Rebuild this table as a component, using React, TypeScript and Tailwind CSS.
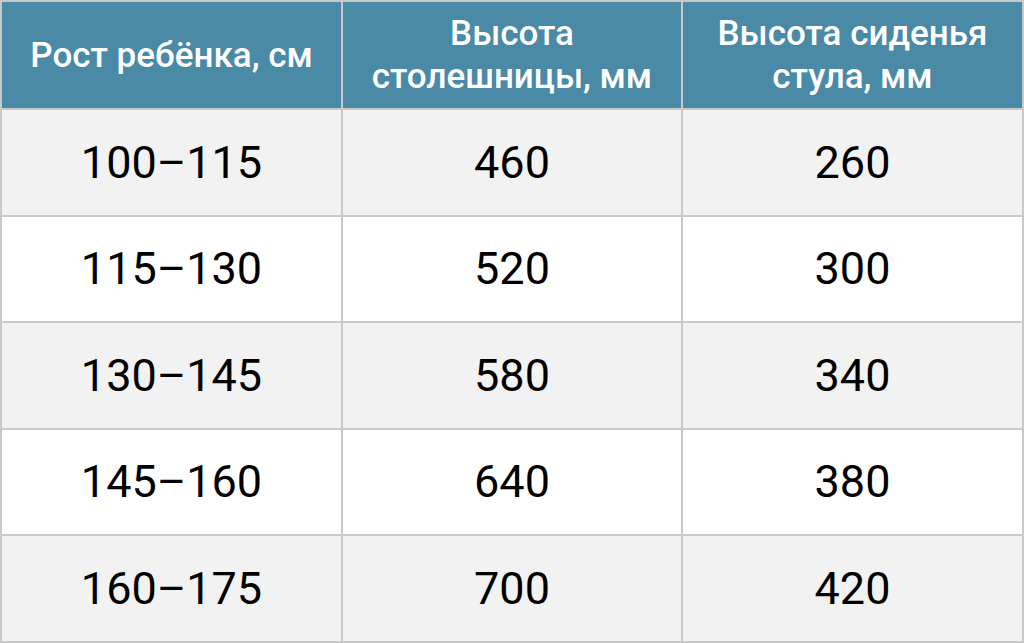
import React from 'react';

const rows: [string, string, string][] = [
  ['100–115', '460', '260'],
  ['115–130', '520', '300'],
  ['130–145', '580', '340'],
  ['145–160', '640', '380'],
  ['160–175', '700', '420'],
];

const headers = ['Рост ребёнка, см', 'Высота\nстолешницы, мм', 'Высота сиденья\nстула, мм'];

const App: React.FC = () => {
  return (
    <div
      className="w-[1024px] h-[643px] grid grid-cols-[339px_338px_339px] grid-rows-[106px_1fr_1fr_1fr_1fr_1fr] gap-[2px] p-[2px] bg-[#c9c9c9]"
      style={{ fontFamily: 'Roboto, "Noto Sans", sans-serif' }}
    >
      {headers.map((h) => (
        <div
          key={h}
          className="bg-[#4a8aa7] text-white font-medium text-[35px] leading-[43px] flex items-center justify-center text-center whitespace-pre-line"
        >
          {h}
        </div>
      ))}
      {rows.map((row, i) =>
        row.map((cell, j) => (
          <div
            key={`${i}-${j}`}
            className={`${i % 2 === 0 ? 'bg-[#f2f2f2]' : 'bg-white'} text-black text-[45px] flex items-center justify-center`}
          >
            {cell}
          </div>
        ))
      )}
    </div>
  );
};

export default App;
